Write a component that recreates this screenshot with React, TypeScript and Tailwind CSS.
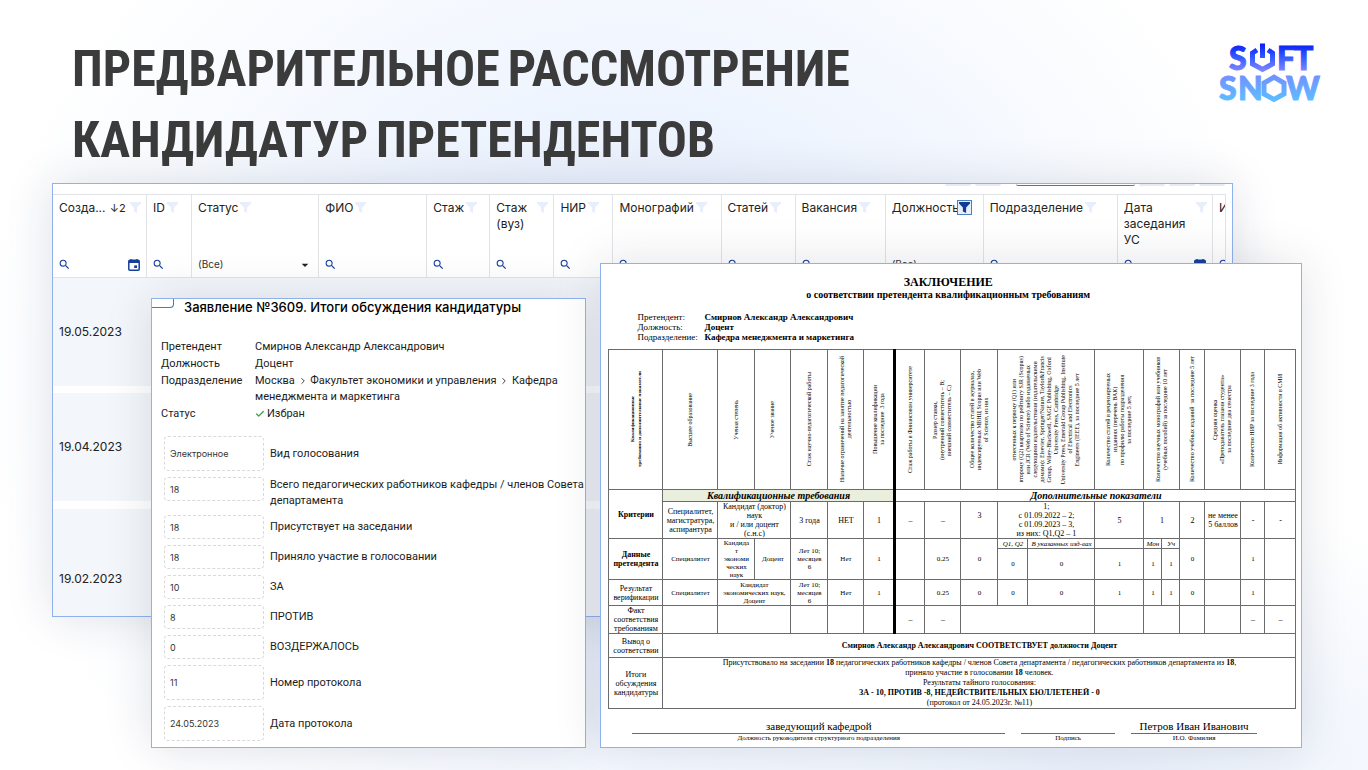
import type { ReactNode } from "react";
import { MdSearch, MdArrowDropDown } from "react-icons/md";
import { Check, ChevronRight } from "lucide-react";

// ── Icons and logo ────────────────────────────────────────────────────────────

function Funnel({ className }: { className: string }) {
  return (
    <svg viewBox="0 0 11 11" className={`w-[11px] h-[11px] shrink-0 ${className}`} fill="currentColor" aria-hidden>
      <path d="M0 0h11v1.6L7.1 5.6V11L3.9 9.6V5.6L0 1.6z" />
    </svg>
  );
}

function CalendarIcon() {
  return (
    <svg viewBox="0 0 12 12" className="w-3 h-3 shrink-0" aria-hidden>
      <rect x="0.8" y="1.3" width="10.4" height="9.9" rx="1" fill="none" stroke="currentColor" strokeWidth="1.5" />
      <path d="M1 1.200H11V4H1Z" fill="currentColor" />
      <path d="M3 0V2M9 0V2" stroke="currentColor" strokeWidth="1.2" />
      <rect x="6.2" y="6.400" width="2.800" height="2.600" fill="currentColor" />
    </svg>
  );
}

function Logo() {
  return (
    <svg viewBox="0 0 104 60" className="w-[104px] h-[60px] shrink-0 overflow-visible" role="img" aria-label="Soft Snow">
      <defs>
        <linearGradient id="logoFill" gradientUnits="userSpaceOnUse" x1="0" y1="2" x2="0" y2="60">
          <stop offset="0%" stopColor="#0a1cf5" />
          <stop offset="20%" stopColor="#2a55ff" />
          <stop offset="46%" stopColor="#7d86ff" />
          <stop offset="58%" stopColor="#6f95ff" />
          <stop offset="100%" stopColor="#5cc0ff" />
        </linearGradient>
      </defs>
      <g fill="url(#logoFill)" stroke="url(#logoFill)" strokeWidth="1" fontFamily="Lato, sans-serif" fontWeight="900" fontSize="32">
        <text x="11" y="28">S</text>
        <text x="59" y="28">F</text>
        <text x="76" y="28">T</text>
        <text x="1" y="58">S</text>
        <text x="20" y="58">N</text>
        <text x="68" y="58">W</text>
      </g>
      <g fill="none" stroke="url(#logoFill)" strokeWidth="5">
        <path d="M39 8L34.500 11V22L44.500 27.500L54.500 22V11L50 8" />
        <path d="M44.500 1.500V16" />
        <path d="M56 35.200L66 41V52L56 57.500L46 52V41Z" />
      </g>
    </svg>
  );
}

// ── Applications grid ─────────────────────────────────────────────────────────

type Column = {
  label: string;
  width: string;
  filter?: "search" | "date" | "select";
  sorted?: boolean;
  active?: boolean;
  spread?: boolean;
};

const COLUMNS: Column[] = [
  { label: "Созда...", width: "w-[94px]", filter: "date", sorted: true, spread: true },
  { label: "ID", width: "w-[45px]" },
  { label: "Статус", width: "w-[127px]", filter: "select" },
  { label: "ФИО", width: "w-[108px]" },
  { label: "Стаж", width: "w-[63px]" },
  { label: "Стаж\n(вуз)", width: "w-[64px]", spread: true },
  { label: "НИР", width: "w-[59px]" },
  { label: "Монографий", width: "w-[108px]" },
  { label: "Статей", width: "w-[74px]" },
  { label: "Вакансия", width: "w-[90px]" },
  { label: "Должность", width: "w-[98px]", filter: "select", active: true },
  { label: "Подразделение", width: "w-[134px]" },
  { label: "Дата\nзаседания\nУС", width: "w-[95px]", filter: "date", spread: true },
  { label: "И", width: "w-[13px]" },
];

const ROWS = [
  { date: "19.05.2023", cell: "h-[115px] border-b-[7px]" },
  { date: "19.04.2023", cell: "h-[116px] border-b-[8px]" },
  { date: "19.02.2023", cell: "h-[107px] pt-[32px] border-b-0" },
];

function HeaderCell({ col }: { col: Column }) {
  return (
    <th scope="col" className="h-[58px] p-0 align-top text-left font-normal border-r border-[#e2e3e6] overflow-hidden">
      <div className={`flex items-start gap-[2px] pt-[5px] pl-[6px] pr-[5px] leading-4 ${col.spread ? "justify-between" : ""}`}>
        <span className="whitespace-pre">{col.label}</span>
        {col.sorted && <span className="text-[11px]">↓2</span>}
        {col.active ? (
          <button className="-ml-[4px] border border-[#4a7fc0] bg-[#e6effb] p-[1px]" aria-label={`Фильтр: ${col.label}`}>
            <Funnel className="text-[#0f3c96]" />
          </button>
        ) : (
          <Funnel className="mt-[2px] text-[#e8eefb]" />
        )}
      </div>
    </th>
  );
}

function FilterCell({ col }: { col: Column }) {
  return (
    <td className="h-[26px] p-0 border-r border-b border-[#e2e3e6] overflow-hidden">
      {col.filter === "select" ? (
        <label className="flex items-center pl-[6px] pr-[5px]">
          <select className="appearance-none flex-1 min-w-0 text-[10px] text-[#333]" aria-label={col.label}>
            <option>(Все)</option>
          </select>
          <MdArrowDropDown className="w-4 h-4 shrink-0" />
        </label>
      ) : (
        <label className="flex items-center justify-between pl-[5px] pr-[6px] text-[#153f9c]">
          <MdSearch className="w-[13px] h-[13px] shrink-0" />
          <input className="flex-1 min-w-0 h-4 text-[10px]" aria-label={col.label} />
          {col.filter === "date" && <CalendarIcon />}
        </label>
      )}
    </td>
  );
}

function ApplicationsWindow() {
  return (
    <section className="col-start-1 row-start-1 self-start min-w-0 ml-[52px] mr-[135px] border border-[#8fb2ec] bg-white overflow-hidden shadow-[0_0_44px_rgba(30,40,70,0.13)]">
      <div className="h-[10px] flex items-start justify-end gap-1 pr-[7px]">
        <span className="h-[2px] w-[26px] rounded-b bg-[#e6eaf3]" />
        <span className="h-[2px] w-[26px] rounded-b bg-[#e6eaf3]" />
        <span className="h-[2px] w-[119px] ml-[11px] rounded-b border-b border-[#5f7291]" />
        <span className="h-[2px] w-[26px] rounded-b bg-[#e6eaf3]" />
        <span className="h-[2px] w-[26px] rounded-b bg-[#e6eaf3]" />
        <span className="h-[2px] w-[26px] rounded-b bg-[#e6eaf3]" />
      </div>
      <div className="pr-[6px]">
        <table className="w-full table-fixed border-separate border-spacing-0 text-[12px] text-[#222]">
          <colgroup>
            {COLUMNS.map(c => <col key={c.label} className={c.width} />)}
          </colgroup>
          <thead>
            <tr className="[&>th]:border-t">{COLUMNS.map(c => <HeaderCell key={c.label} col={c} />)}</tr>
            <tr>{COLUMNS.map(c => <FilterCell key={c.label} col={c} />)}</tr>
          </thead>
          <tbody>
            {ROWS.map(r => (
              <tr key={r.date} className="bg-[#f3f6fa]">
                <td colSpan={COLUMNS.length} className={`pl-[6px] border-white ${r.cell}`}>{r.date}</td>
              </tr>
            ))}
          </tbody>
        </table>
      </div>
    </section>
  );
}

// ── Candidate card ────────────────────────────────────────────────────────────

const FIELDS = [
  { id: "kind", label: "Вид голосования", value: "Электронное", box: "h-[35px]" },
  { id: "staff", label: "Всего педагогических работников кафедры / членов Совета\nдепартамента", value: "18", box: "h-[24px]" },
  { id: "present", label: "Присутствует на заседании", value: "18", box: "h-[24px]" },
  { id: "voted", label: "Приняло участие в голосовании", value: "18", box: "h-[24px]" },
  { id: "for", label: "ЗА", value: "10", box: "h-[24px]" },
  { id: "against", label: "ПРОТИВ", value: "8", box: "h-[24px]" },
  { id: "abstained", label: "ВОЗДЕРЖАЛОСЬ", value: "0", box: "h-[24px]" },
  { id: "number", label: "Номер протокола", value: "11", box: "h-[35px]" },
  { id: "date", label: "Дата протокола", value: "24.05.2023", box: "h-[35px]" },
];

function CandidateWindow() {
  return (
    <section className="flex-[435] min-w-0 border border-[#8fb2ec] bg-white overflow-hidden shadow-[0_0_44px_rgba(30,40,70,0.13)] font-[Roboto,sans-serif] text-[11px] text-[#1c1c1c]">
      <div className="flex items-start gap-[10px]">
        <button className="w-[22px] h-[9px] rounded-br border-r border-b border-[#4d78bd]" aria-label="Назад" />
        <h2 className="font-[Inter,sans-serif] text-[13px] font-medium leading-4 text-black whitespace-nowrap">
          Заявление №3609. Итоги обсуждения кандидатуры
        </h2>
      </div>
      <dl className="grid grid-cols-[94px_1fr] gap-y-[1px] pl-[9px] pt-[24px] leading-4">
        <dt>Претендент</dt>
        <dd>Смирнов Александр Александрович</dd>
        <dt>Должность</dt>
        <dd>Доцент</dd>
        <dt>Подразделение</dt>
        <dd>
          Москва <ChevronRight className="inline w-[10px] h-[10px]" /> Факультет экономики и управления{" "}
          <ChevronRight className="inline w-[10px] h-[10px]" /> Кафедра
          <br />
          менеджмента и маркетинга
        </dd>
        <dt>Статус</dt>
        <dd className="flex items-center gap-[2px]">
          <Check className="w-[10px] h-[10px] text-[#3b9b4a]" strokeWidth={3} />
          Избран
        </dd>
      </dl>
      <div className="flex flex-col gap-[6px] pl-[12px] pt-[14px] pb-[6px]">
        {FIELDS.map(f => (
          <div key={f.id} className="flex items-center gap-[6px]">
            <input id={f.id} readOnly value={f.value}
              className={`w-[100px] shrink-0 self-start rounded border border-dashed border-[#d9d9dc] pl-[5px] font-[Inter,sans-serif] text-[9px] text-[#333] ${f.box}`} />
            <label htmlFor={f.id} className="whitespace-pre leading-4">{f.label}</label>
          </div>
        ))}
      </div>
    </section>
  );
}

// ── Conclusion document ───────────────────────────────────────────────────────

const DOC_COLS = [
  "w-[54px]", "w-[55px]", "w-[37px]", "w-[36px]", "w-[37px]", "w-[36px]", "w-[31px]", "w-[30px]", "w-[36px]", "w-[37px]",
  "w-[30px]", "w-[67px]", "w-[49px]", "w-[18px]", "w-[18px]", "w-[25px]", "w-[36px]", "w-[24px]", "w-[31px]",
];

const CRITERIA: { text: string; span?: number; divider?: boolean; bold?: boolean }[] = [
  { text: "Квалификационные\nтребования и дополнительные показатели", bold: true },
  { text: "Высшее образование" },
  { text: "Ученая степень" },
  { text: "Ученое звание" },
  { text: "Стаж научно-педагогической работы" },
  { text: "Наличие ограничений на занятие педагогической\nдеятельностью" },
  { text: "Повышение квалификации\nза последние  3 года", divider: true },
  { text: "Стаж работы в Финансовом университете" },
  { text: "Размер ставки,\n(внутренний совместитель – В;\nвнешний совместитель – С)" },
  { text: "Общее количество статей в журналах,\nиндексируемых МБНЦ Scopus или Web\nof Science, из них" },
  {
    text: "отнесенных к первому (Q1) или\nвторому (Q2) квартилю по рейтингу SJR (Scopus)\nили JCR (Web of Science) либо издаваемых\nследующими издательствами (издательскими\nдомами): Elsevier, Springer/Nature, Taylor&Francis\nGroup, Wiley-Blackwell, SAGE Publishing, Oxford\nUniversity Press, Cambridge\nUniversity Press, Emerald Group Publishing, Institute\nof Electrical and Electronics\nEngineers (IEEE), за последние 5 лет",
    span: 2,
  },
  { text: "Количество статей в рецензируемых\nизданиях (перечень ВАК)\nпо профилю работы подразделения\nза последние 5 лет," },
  { text: "Количество научных монографий или учебников\n(учебных пособий) за последние 10 лет", span: 2 },
  { text: "Количество учебных изданий  за последние 5 лет" },
  { text: "Средняя оценка\n«Преподаватель глазами студента»\nза последние два семестра" },
  { text: "Количество НИР за последние 3 года" },
  { text: "Информация об активности в СМИ" },
];

function Cell({ children, span, rows, className = "" }: { children?: ReactNode; span?: number; rows?: number; className?: string }) {
  return (
    <td colSpan={span} rowSpan={rows} className={`border border-[#6b6b6b] p-0 text-center whitespace-pre ${className}`}>
      {children}
    </td>
  );
}

function RowHead({ children, rows, className = "" }: { children: ReactNode; rows?: number; className?: string }) {
  return (
    <th scope="row" rowSpan={rows} className={`border border-[#6b6b6b] p-0 text-center text-[8px] leading-[9px] whitespace-pre ${className}`}>
      {children}
    </th>
  );
}

const DIVIDER = "border-r-[3px] border-r-black";

function Signature({ name, caption, className }: { name?: string; caption: string; className: string }) {
  return (
    <div className={`flex flex-col text-center ${className}`}>
      <span className="h-[14px] border-b border-[#6b6b6b] text-[11px] leading-3">{name}</span>
      <span className="text-[7px] leading-[9px]">{caption}</span>
    </div>
  );
}

function ConclusionWindow() {
  return (
    <section className="flex-[702] min-w-0 border border-[#8fb2ec] bg-white overflow-hidden shadow-[0_0_44px_rgba(30,40,70,0.13)] font-['Liberation_Serif',serif] text-black">
      <div className="pt-[12px] pr-[6px] text-center font-bold">
        <h2 className="text-[12px] leading-[13px]">ЗАКЛЮЧЕНИЕ</h2>
        <p className="text-[10px] leading-[12px]">о соответствии претендента квалификационным требованиям</p>
      </div>
      <dl className="grid grid-cols-[67px_1fr] pl-[36px] pt-[11px] pb-[7px] text-[9px] leading-[10px] [&>dd]:font-bold">
        <dt>Претендент:</dt>
        <dd>Смирнов Александр Александрович</dd>
        <dt>Должность:</dt>
        <dd>Доцент</dd>
        <dt>Подразделение:</dt>
        <dd>Кафедра менеджмента и маркетинга</dd>
      </dl>

      <div className="pl-[7px] pr-[6px]">
        <table className="w-full table-fixed border-collapse text-[7px] leading-[8px]">
          <colgroup>
            {DOC_COLS.map((w, i) => <col key={i} className={w} />)}
          </colgroup>
          <thead>
            <tr>
              {CRITERIA.map(c => (
                <th key={c.text} scope="col" colSpan={c.span}
                  className={`h-[140px] border border-[#6b6b6b] p-0 ${c.divider ? DIVIDER : ""} ${c.bold ? "text-[5px] font-bold" : "text-[6px] font-normal"}`}>
                  <span className="inline-block align-middle rotate-180 [writing-mode:vertical-rl] text-center whitespace-pre leading-[7px]">{c.text}</span>
                </th>
              ))}
            </tr>
          </thead>
          <tbody>
            <tr className="text-[10px] leading-[11px] font-bold italic">
              <RowHead rows={2} className="not-italic">Критерии</RowHead>
              <Cell span={6} className={`bg-[#e9eedd] ${DIVIDER}`}>Квалификационные требования</Cell>
              <Cell span={12}>Дополнительные показатели</Cell>
            </tr>
            <tr className="text-[8px] leading-[9px]">
              <Cell>{"Специалитет,\nмагистратура,\nаспирантура"}</Cell>
              <Cell span={2}>{"Кандидат (доктор)\nнаук\nи / или доцент\n(с.н.с)"}</Cell>
              <Cell>3 года</Cell>
              <Cell>НЕТ</Cell>
              <Cell className={DIVIDER}>1</Cell>
              <Cell>–</Cell>
              <Cell>–</Cell>
              <Cell className="pb-[9px]">3</Cell>
              <Cell span={2}>{"1;\nс 01.09.2022 – 2;\nс 01.09.2023 – 3,\nиз них: Q1,Q2 – 1"}</Cell>
              <Cell>5</Cell>
              <Cell span={2}>1</Cell>
              <Cell>2</Cell>
              <Cell>{"не менее\n5 баллов"}</Cell>
              <Cell>-</Cell>
              <Cell>-</Cell>
            </tr>
            <tr>
              <RowHead rows={2} className="font-bold">{"Данные\nпретендента"}</RowHead>
              <Cell rows={2}>Специалитет</Cell>
              <Cell rows={2}>{"Кандида\nт\nэкономи\nческих\nнаук"}</Cell>
              <Cell rows={2}>Доцент</Cell>
              <Cell rows={2}>{"Лет 10;\nмесяцев\n6"}</Cell>
              <Cell rows={2}>Нет</Cell>
              <Cell rows={2} className={DIVIDER}>1</Cell>
              <Cell rows={2} />
              <Cell rows={2}>0.25</Cell>
              <Cell rows={2}>0</Cell>
              <Cell className="italic">Q1, Q2</Cell>
              <Cell className="italic">В указанных изд-вах</Cell>
              <Cell />
              <Cell className="italic">Мон</Cell>
              <Cell className="italic">Уч</Cell>
              <Cell rows={2}>0</Cell>
              <Cell rows={2} />
              <Cell rows={2}>1</Cell>
              <Cell rows={2} />
            </tr>
            <tr>
              <Cell className="h-[31px]">0</Cell>
              <Cell>0</Cell>
              <Cell>1</Cell>
              <Cell>1</Cell>
              <Cell>1</Cell>
            </tr>
            <tr>
              <RowHead className="h-[26px] font-normal">{"Результат\nверификации"}</RowHead>
              <Cell>Специалитет</Cell>
              <Cell span={2}>{"Кандидат\nэкономических наук,\nДоцент"}</Cell>
              <Cell>{"Лет 10;\nмесяцев\n6"}</Cell>
              <Cell>Нет</Cell>
              <Cell className={DIVIDER}>1</Cell>
              <Cell />
              <Cell>0.25</Cell>
              <Cell>0</Cell>
              <Cell>0</Cell>
              <Cell>0</Cell>
              <Cell>1</Cell>
              <Cell>1</Cell>
              <Cell>1</Cell>
              <Cell>0</Cell>
              <Cell />
              <Cell>1</Cell>
              <Cell />
            </tr>
            <tr className="text-[8px]">
              <RowHead className="font-normal">{"Факт\nсоответствия\nтребованиям"}</RowHead>
              <Cell />
              <Cell span={2} />
              <Cell />
              <Cell />
              <Cell className={DIVIDER} />
              <Cell>–</Cell>
              <Cell>–</Cell>
              <Cell span={3} />
              <Cell />
              <Cell span={2} />
              <Cell />
              <Cell />
              <Cell>–</Cell>
              <Cell>–</Cell>
            </tr>
            <tr>
              <RowHead className="h-[24px] font-normal">{"Вывод о\nсоответствии"}</RowHead>
              <Cell span={18} className="text-[8px] font-bold">
                Смирнов Александр Александрович СООТВЕТСТВУЕТ должности Доцент
              </Cell>
            </tr>
            <tr>
              <RowHead className="font-normal">{"Итоги\nобсуждения\nкандидатуры"}</RowHead>
              <Cell span={18} className="text-[8px] leading-[10px]">
                Присутствовало на заседании <b>18</b> педагогических работников кафедры / членов Совета департамента / педагогических работников департамента из <b>18</b>,
                <br />
                приняло участие в голосовании <b>18</b> человек.
                <br />
                Результаты тайного голосования:
                <br />
                <b>ЗА - 10, ПРОТИВ -8, НЕДЕЙСТВИТЕЛЬНЫХ БЮЛЛЕТЕНЕЙ - 0</b>
                <br />
                (протокол от 24.05.2023г. №11)
              </Cell>
            </tr>
          </tbody>
        </table>
      </div>

      <div className="flex gap-4 pl-[31px] pr-[44px] pt-[11px] pb-[4px]">
        <Signature className="flex-[373]" name="заведующий кафедрой" caption="Должность руководителя структурного подразделения" />
        <Signature className="flex-[94]" caption="Подпись" />
        <Signature className="flex-[126]" name="Петров Иван Иванович" caption="И.О. Фамилия" />
      </div>
    </section>
  );
}

// ── Slide ─────────────────────────────────────────────────────────────────────

export default function App() {
  return (
    <main className="min-h-screen overflow-hidden bg-white bg-[radial-gradient(ellipse_48%_75%_at_46%_48%,#dfeafc_0%,#eef4fe_45%,transparent_100%),radial-gradient(ellipse_40%_35%_at_80%_100%,#e9f0fb,transparent)] font-[Inter,sans-serif]">
      <header className="flex items-start justify-between pt-[36px] pb-[5px] pl-[72px] pr-[46px]">
        <h1 className="font-['Bebas_Neue','Roboto_Condensed','Liberation_Sans_Narrow','Liberation_Sans',sans-serif] text-[50px] leading-[71px] font-bold text-[#3b3b3b] uppercase whitespace-nowrap">
          Предварительное рассмотрение
          <br />
          кандидатур претендентов
        </h1>
        <div className="pt-[6px]">
          <Logo />
        </div>
      </header>

      <div className="grid grid-cols-1 pb-[22px]">
        <ApplicationsWindow />
        <div className="col-start-1 row-start-1 min-w-0 mt-[80px] ml-[151px] mr-[66px] flex items-end gap-[14px]">
          <CandidateWindow />
          <ConclusionWindow />
        </div>
      </div>
    </main>
  );
}
